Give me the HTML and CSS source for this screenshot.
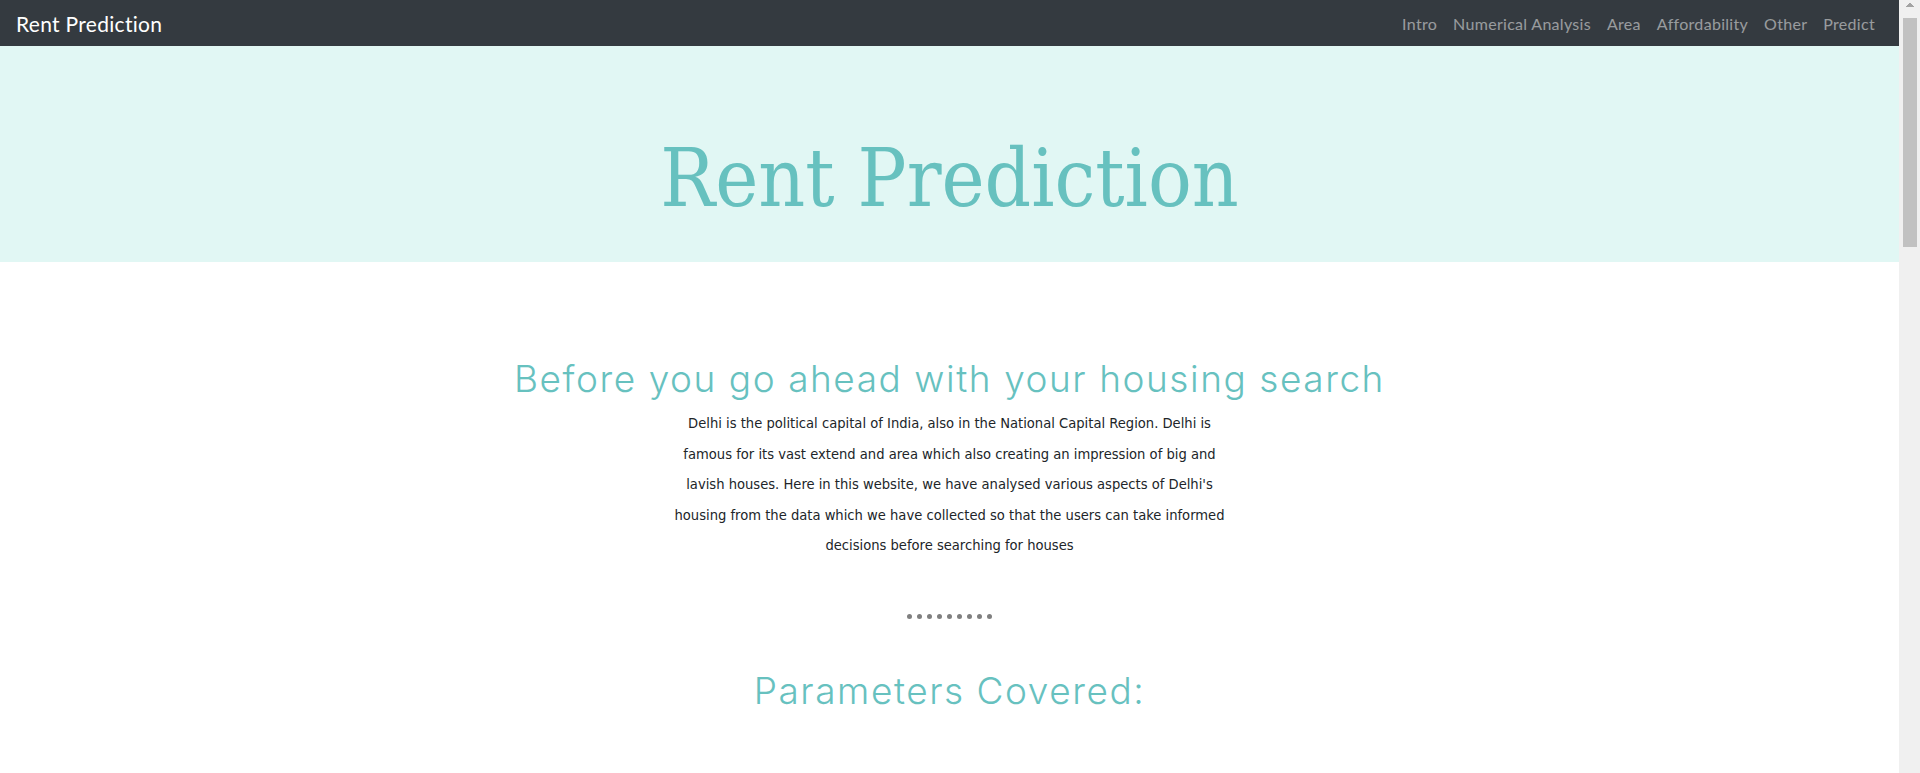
FILE: index.html
```html
<!DOCTYPE html>
<html lang="en">
<head>
<meta charset="utf-8">
<title>Rent Prediction</title>
<link rel="stylesheet" href="styles.css">
</head>
<body>
<div class="page">
  <nav class="navbar">
    <a class="brand" href="#">Rent Prediction</a>
    <ul class="nav-links">
      <li><a href="#intro">Intro</a></li>
      <li><a href="#numerical">Numerical Analysis</a></li>
      <li><a href="#area">Area</a></li>
      <li><a href="#affordability">Affordability</a></li>
      <li><a href="#other">Other</a></li>
      <li><a href="#predict">Predict</a></li>
    </ul>
  </nav>
  <header class="hero">
    <h1 class="hero-title">Rent Prediction</h1>
  </header>
  <section class="intro" id="intro">
    <h2 class="section-title first">Before you go ahead with your housing search</h2>
    <p class="intro-text">Delhi is the political capital of India, also in the National Capital Region. Delhi is famous for its vast extend and area which also creating an impression of big and lavish houses. Here in this website, we have analysed various aspects of Delhi's housing from the data which we have collected so that the users can take informed decisions before searching for houses</p>
    <div class="dots"><span></span><span></span><span></span><span></span><span></span><span></span><span></span><span></span><span></span></div>
    <h2 class="section-title">Parameters Covered:</h2>
  </section>
  <section class="params"></section>
</div>
<div class="scrollbar"><div class="scroll-up"></div><div class="scroll-thumb"></div></div>
</body>
</html>
```
FILE: styles.css
```css
html, body {
  margin: 0;
  padding: 0;
  overflow: hidden;
}
body {
  background: #ffffff;
  font-family: "Lato", "Liberation Sans", sans-serif;
}
.page {
  margin-right: 21px;
}
.navbar {
  height: 46px;
  background: #343a40;
  display: flex;
  align-items: center;
  justify-content: space-between;
  padding: 0 16px;
}
.brand {
  color: #ffffff;
  text-decoration: none;
  font-size: 21px;
  letter-spacing: 0.3px;
}
.nav-links {
  list-style: none;
  margin: 0;
  padding: 0;
  display: flex;
}
.nav-links a {
  display: block;
  padding: 8px;
  color: rgba(255,255,255,0.5);
  text-decoration: none;
  font-size: 16px;
  letter-spacing: 0.3px;
}
.hero {
  background: #e1f7f4;
  height: 216px;
  display: flex;
  align-items: flex-start;
  justify-content: center;
  box-sizing: border-box;
  padding-top: 92px;
}
.hero-title {
  margin: 0;
  font-family: "DejaVu Serif Condensed", "DejaVu Serif", serif;
  font-stretch: condensed;
  font-weight: normal;
  font-size: 81px;
  color: #67c1bf;
  line-height: 80px;
}
.intro {
  display: flex;
  flex-direction: column;
  align-items: center;
  padding-top: 94px;
}
.section-title {
  margin: 0;
  font-family: "Inter", "Lato", sans-serif;
  font-weight: 300;
  font-size: 37px;
  line-height: 46px;
  letter-spacing: 1.55px;
  color: #67c1bf;
  text-align: center;
}
.intro-text {
  width: 556px;
  margin: 6px 0 0;
  text-align: center;
  font-family: "DejaVu Sans Condensed", "DejaVu Sans", sans-serif;
  font-stretch: condensed;
  font-size: 14.6px;
  line-height: 30.5px;
  color: #212529;
}
.dots {
  display: flex;
  gap: 5px;
  margin-top: 53px;
}
.dots span {
  width: 5px;
  height: 5px;
  border-radius: 50%;
  background: #7f7f7f;
}
.dots + .section-title {
  margin-top: 49px;
}
.params {
  height: 1700px;
}
.scrollbar {
  position: fixed;
  top: 0;
  right: 0;
  width: 21px;
  height: 100vh;
  background: #f0f0f0;
  display: flex;
  flex-direction: column;
  align-items: center;
}
.scroll-up {
  width: 21px;
  height: 18px;
  background:
    linear-gradient(to top left, #a3a3a3 50%, transparent 50%) no-repeat 6px 3px / 5px 4px,
    linear-gradient(to top right, #a3a3a3 50%, transparent 50%) no-repeat 11px 3px / 5px 4px;
}
.scroll-thumb {
  width: 14px;
  height: 229px;
  background: #c1c1c1;
  margin-left: 1px;
}
```
